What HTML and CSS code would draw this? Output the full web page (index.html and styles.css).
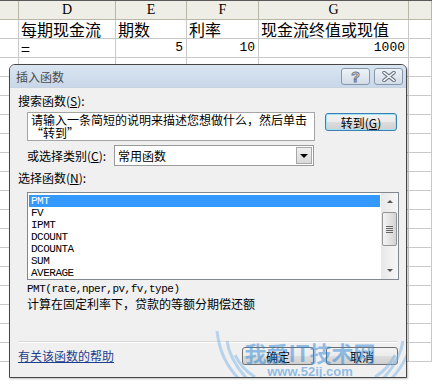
FILE: index.html
```html
<!DOCTYPE html>
<html lang="zh-CN">
<head>
    <meta charset="UTF-8">
    <title>插入函数</title>
    <link rel="stylesheet" href="styles.css">
</head>
<body>
    <div class="sheet">
        <div class="row head">
            <div class="cell"></div><div class="cell">D</div><div class="cell">E</div><div class="cell">F</div><div class="cell">G</div><div class="cell"></div>
        </div>
        <div class="row">
            <div class="cell"></div><div class="cell">每期现金流</div><div class="cell">期数</div><div class="cell">利率</div><div class="cell">现金流终值或现值</div><div class="cell"></div>
        </div>
        <div class="row">
            <div class="cell"></div><div class="cell">=</div><div class="cell num">5</div><div class="cell num">10</div><div class="cell num">1000</div><div class="cell"></div>
        </div>
        <div class="row"><div class="cell"></div><div class="cell"></div><div class="cell"></div><div class="cell"></div><div class="cell"></div><div class="cell"></div></div>
        <div class="row"><div class="cell"></div><div class="cell"></div><div class="cell"></div><div class="cell"></div><div class="cell"></div><div class="cell"></div></div>
        <div class="row"><div class="cell"></div><div class="cell"></div><div class="cell"></div><div class="cell"></div><div class="cell"></div><div class="cell"></div></div>
        <div class="row"><div class="cell"></div><div class="cell"></div><div class="cell"></div><div class="cell"></div><div class="cell"></div><div class="cell"></div></div>
        <div class="row"><div class="cell"></div><div class="cell"></div><div class="cell"></div><div class="cell"></div><div class="cell"></div><div class="cell"></div></div>
        <div class="row"><div class="cell"></div><div class="cell"></div><div class="cell"></div><div class="cell"></div><div class="cell"></div><div class="cell"></div></div>
        <div class="row"><div class="cell"></div><div class="cell"></div><div class="cell"></div><div class="cell"></div><div class="cell"></div><div class="cell"></div></div>
        <div class="row"><div class="cell"></div><div class="cell"></div><div class="cell"></div><div class="cell"></div><div class="cell"></div><div class="cell"></div></div>
        <div class="row"><div class="cell"></div><div class="cell"></div><div class="cell"></div><div class="cell"></div><div class="cell"></div><div class="cell"></div></div>
        <div class="row"><div class="cell"></div><div class="cell"></div><div class="cell"></div><div class="cell"></div><div class="cell"></div><div class="cell"></div></div>
        <div class="row"><div class="cell"></div><div class="cell"></div><div class="cell"></div><div class="cell"></div><div class="cell"></div><div class="cell"></div></div>
        <div class="row"><div class="cell"></div><div class="cell"></div><div class="cell"></div><div class="cell"></div><div class="cell"></div><div class="cell"></div></div>
        <div class="row"><div class="cell"></div><div class="cell"></div><div class="cell"></div><div class="cell"></div><div class="cell"></div><div class="cell"></div></div>
        <div class="row"><div class="cell"></div><div class="cell"></div><div class="cell"></div><div class="cell"></div><div class="cell"></div><div class="cell"></div></div>
        <div class="row"><div class="cell"></div><div class="cell"></div><div class="cell"></div><div class="cell"></div><div class="cell"></div><div class="cell"></div></div>
        <div class="row"><div class="cell"></div><div class="cell"></div><div class="cell"></div><div class="cell"></div><div class="cell"></div><div class="cell"></div></div>
    </div>

    <div class="dialog">
        <div class="titlebar">
            <span class="title">插入函数</span>
            <span class="tbtn">
                <svg width="13" height="13" viewBox="0 0 13 13"><text x="6.5" y="11.5" text-anchor="middle" font-family="Liberation Sans, sans-serif" font-size="14" font-weight="bold" fill="#fff" stroke="#6b7686" stroke-width="1">?</text></svg>
            </span>
            <span class="tbtn">
                <svg width="16" height="11" viewBox="0 0 16 11"><path d="M3 1.5 L13 9.5 M13 1.5 L3 9.5" stroke="#6b7686" stroke-width="3.6" stroke-linecap="round"/><path d="M3 1.5 L13 9.5 M13 1.5 L3 9.5" stroke="#fff" stroke-width="1.6" stroke-linecap="round"/></svg>
            </span>
        </div>
        <div class="dbody">
            <div class="label">搜索函数(<u>S</u>):</div>
            <div class="search-row">
                <div class="search-box">请输入一条简短的说明来描述您想做什么，然后单击<br>“转到”</div>
                <button class="btn go-btn">转到(<u>G</u>)</button>
            </div>
            <div class="cat-row">
                <span class="cat-label">或选择类别(<u>C</u>):</span>
                <div class="select">
                    <span class="select-text">常用函数</span>
                    <span class="select-arrow"><i class="tri-down"></i></span>
                </div>
            </div>
            <div class="label label-list">选择函数(<u>N</u>):</div>
            <div class="list">
                <div class="items">
                    <div class="item selected">PMT</div>
                    <div class="item">FV</div>
                    <div class="item">IPMT</div>
                    <div class="item">DCOUNT</div>
                    <div class="item">DCOUNTA</div>
                    <div class="item">SUM</div>
                    <div class="item">AVERAGE</div>
                </div>
                <div class="scroll">
                    <div class="sbtn"><i class="tri-up"></i></div>
                    <div class="thumb"><i></i><i></i><i></i><i></i></div>
                    <div class="strack"></div>
                    <div class="sbtn"><i class="tri-down small"></i></div>
                </div>
            </div>
            <div class="syntax">PMT(rate,nper,pv,fv,type)</div>
            <div class="desc">计算在固定利率下，贷款的等额分期偿还额</div>
            <div class="sep"></div>
            <div class="footer">
                <a class="help" href="#">有关该函数的帮助</a>
                <button class="btn">确定</button>
                <button class="btn">取消</button>
            </div>
        </div>
        <div class="watermark">
            <svg class="wings" width="200" height="60" viewBox="0 0 200 60">
                <path d="M30 58 C10 40 4 22 2 4 M36 56 C22 42 14 28 12 14 M40 50 C30 44 24 36 20 28" stroke="#7fb6e6" stroke-width="3" fill="none"/>
                <path d="M170 58 C190 40 196 22 198 4 M164 56 C178 42 186 28 188 14 M160 50 C170 44 176 36 180 28" stroke="#7fb6e6" stroke-width="3" fill="none"/>
            </svg>
            <div class="wm-big">我爱IT技术网</div>
            <div class="wm-small">www.52ij.com</div>
        </div>
    </div>
</body>
</html>
```

FILE: styles.css
```css
body {
    margin: 0;
    background: #fff;
    overflow: hidden;
    font-family: "Noto Sans CJK SC", sans-serif;
}

/* spreadsheet behind the dialog */
.sheet {
    border-top: 1px solid #5a5a5a;
}
.row {
    display: grid;
    grid-template-columns: 19px 97px 71px 72px 150px 1fr;
}
.cell {
    box-sizing: border-box;
    height: 19px;
    border-right: 1px solid #c9c9c9;
    border-bottom: 1px solid #c9c9c9;
    padding: 0 2px;
    font-size: 16px;
    line-height: 18px;
    color: #000;
    white-space: nowrap;
}
.cell.num {
    text-align: right;
    font-family: "Liberation Mono", monospace;
    font-size: 13px;
    padding-right: 3px;
}
.head .cell {
    background: #efeee6;
    border-right-color: #b9b7a8;
    border-bottom-color: #b9b7a8;
    text-align: center;
    font-family: "Liberation Serif", serif;
    font-size: 14px;
}

/* dialog window */
.dialog {
    position: absolute;
    left: 9px;
    top: 64px;
    width: 396px;
    height: 312px;
    border: 1px solid #474747;
    border-radius: 6px 6px 0 0;
    background: #f0f0f0;
    box-shadow: 1px 1px 2px rgba(0, 0, 0, 0.25);
    font-size: 12px;
    color: #000;
    overflow: hidden;
}
.titlebar {
    height: 23px;
    display: flex;
    align-items: center;
    padding: 1px 3px 0 6px;
    box-sizing: border-box;
    background: linear-gradient(#dae5f1, #c8d7e9);
    border-bottom: 1px solid #c9d3de;
}
.title {
    flex: 1;
    color: #4b4b4b;
    line-height: 12px;
}
.tbtn {
    width: 29px;
    height: 17px;
    box-sizing: border-box;
    margin-left: 4px;
    border: 1px solid #8796aa;
    border-radius: 3px;
    background: linear-gradient(#eef3f8, #d2dce8);
    display: flex;
    align-items: center;
    justify-content: center;
}

.dbody {
    padding: 7px 8px 0 8px;
    line-height: 12px;
}
.label {
    height: 12px;
}
.search-row {
    display: flex;
    align-items: flex-start;
    gap: 10px;
    margin: 5px 0 0 9px;
}
.search-box {
    width: 288px;
    height: 29px;
    box-sizing: border-box;
    border: 1px solid #a5a5a5;
    background: #fff;
    padding: 1px 3px;
    line-height: 12.5px;
}
.btn {
    width: 72px;
    height: 18px;
    box-sizing: border-box;
    padding: 0;
    border: 1px solid #707070;
    border-radius: 3px;
    background: linear-gradient(#f2f2f2, #ebebeb 50%, #dddddd 50%, #cfcfcf);
    font-family: "Noto Sans CJK SC", sans-serif;
    font-size: 12px;
    line-height: 15px;
    color: #000;
}
.go-btn {
    margin-top: 1px;
    border-color: #3c7fb1;
    box-shadow: inset 0 0 0 1px #9ee3f7;
}
.cat-row {
    display: flex;
    align-items: center;
    margin: 4px 0 0 9px;
}
.cat-label {
    width: 87px;
}
.select {
    width: 200px;
    height: 21px;
    box-sizing: border-box;
    border: 1px solid #9a9a9a;
    background: #fff;
    display: flex;
    align-items: center;
}
.select-text {
    flex: 1;
    padding-left: 3px;
}
.select-arrow {
    width: 16px;
    height: 17px;
    box-sizing: border-box;
    margin-right: 1px;
    border: 1px solid #a7a7a7;
    background: linear-gradient(#f0f0f0, #d9d9d9);
    display: flex;
    align-items: center;
    justify-content: center;
}
.tri-down {
    width: 0;
    height: 0;
    border-left: 4px solid transparent;
    border-right: 4px solid transparent;
    border-top: 4px solid #000;
}
.tri-down.small {
    border-left-width: 3px;
    border-right-width: 3px;
    border-top: 3px solid #555;
}
.tri-up {
    width: 0;
    height: 0;
    border-left: 3px solid transparent;
    border-right: 3px solid transparent;
    border-bottom: 3px solid #555;
}
.label-list {
    margin-top: 6px;
}
.list {
    display: flex;
    width: 372px;
    height: 88px;
    box-sizing: border-box;
    margin: 8px 0 0 9px;
    border: 1px solid #828790;
    background: #fff;
}
.items {
    flex: 1;
    padding: 2px 0 0 1px;
    font-family: "Liberation Mono", monospace;
    font-size: 11px;
    letter-spacing: -0.5px;
    line-height: 12px;
}
.item {
    height: 12px;
    padding-left: 2px;
    margin-right: 1px;
}
.item.selected {
    background: #3399ff;
    color: #fff;
}
.scroll {
    width: 17px;
    display: flex;
    flex-direction: column;
    background: linear-gradient(90deg, #e8e8e8, #f6f6f6);
}
.sbtn {
    height: 17px;
    display: flex;
    align-items: center;
    justify-content: center;
}
.thumb {
    height: 34px;
    margin: 2px 1px 0 1px;
    box-sizing: border-box;
    border: 1px solid #959595;
    border-radius: 2px;
    background: linear-gradient(90deg, #f4f4f4, #e4e4e4 50%, #d4d4d4);
    display: flex;
    flex-direction: column;
    align-items: center;
    justify-content: center;
    gap: 1px;
}
.thumb i {
    width: 7px;
    height: 1px;
    background: #666;
}
.strack {
    flex: 1;
}
.syntax {
    margin: 2px 0 0 9px;
    font-family: "Liberation Mono", monospace;
    font-size: 11px;
    letter-spacing: -0.5px;
    line-height: 14px;
}
.desc {
    margin-left: 9px;
    line-height: 16px;
}
.sep {
    margin-top: 29px;
    border-top: 1px solid #d8d8d8;
    border-bottom: 1px solid #fff;
}
.footer {
    display: flex;
    align-items: center;
    gap: 12px;
    margin-top: 4px;
}
.footer .btn {
    width: 72px;
}
.help {
    flex: 1;
    color: #1f3d8f;
    text-decoration: underline;
}

/* site watermark stamped over the screenshot */
.watermark {
    position: absolute;
    left: 200px;
    top: 262px;
    width: 200px;
    height: 60px;
    text-align: center;
    pointer-events: none;
    opacity: 0.5;
}
.wings {
    position: absolute;
    left: 5px;
    top: 0;
}
.wm-big {
    position: relative;
    margin-top: 12px;
    font-size: 22px;
    font-weight: bold;
    line-height: 26px;
    color: #2f86d6;
}
.wm-small {
    position: relative;
    font-family: "Liberation Sans", sans-serif;
    font-size: 13px;
    font-weight: bold;
    line-height: 14px;
    color: #2f86d6;
}
```
